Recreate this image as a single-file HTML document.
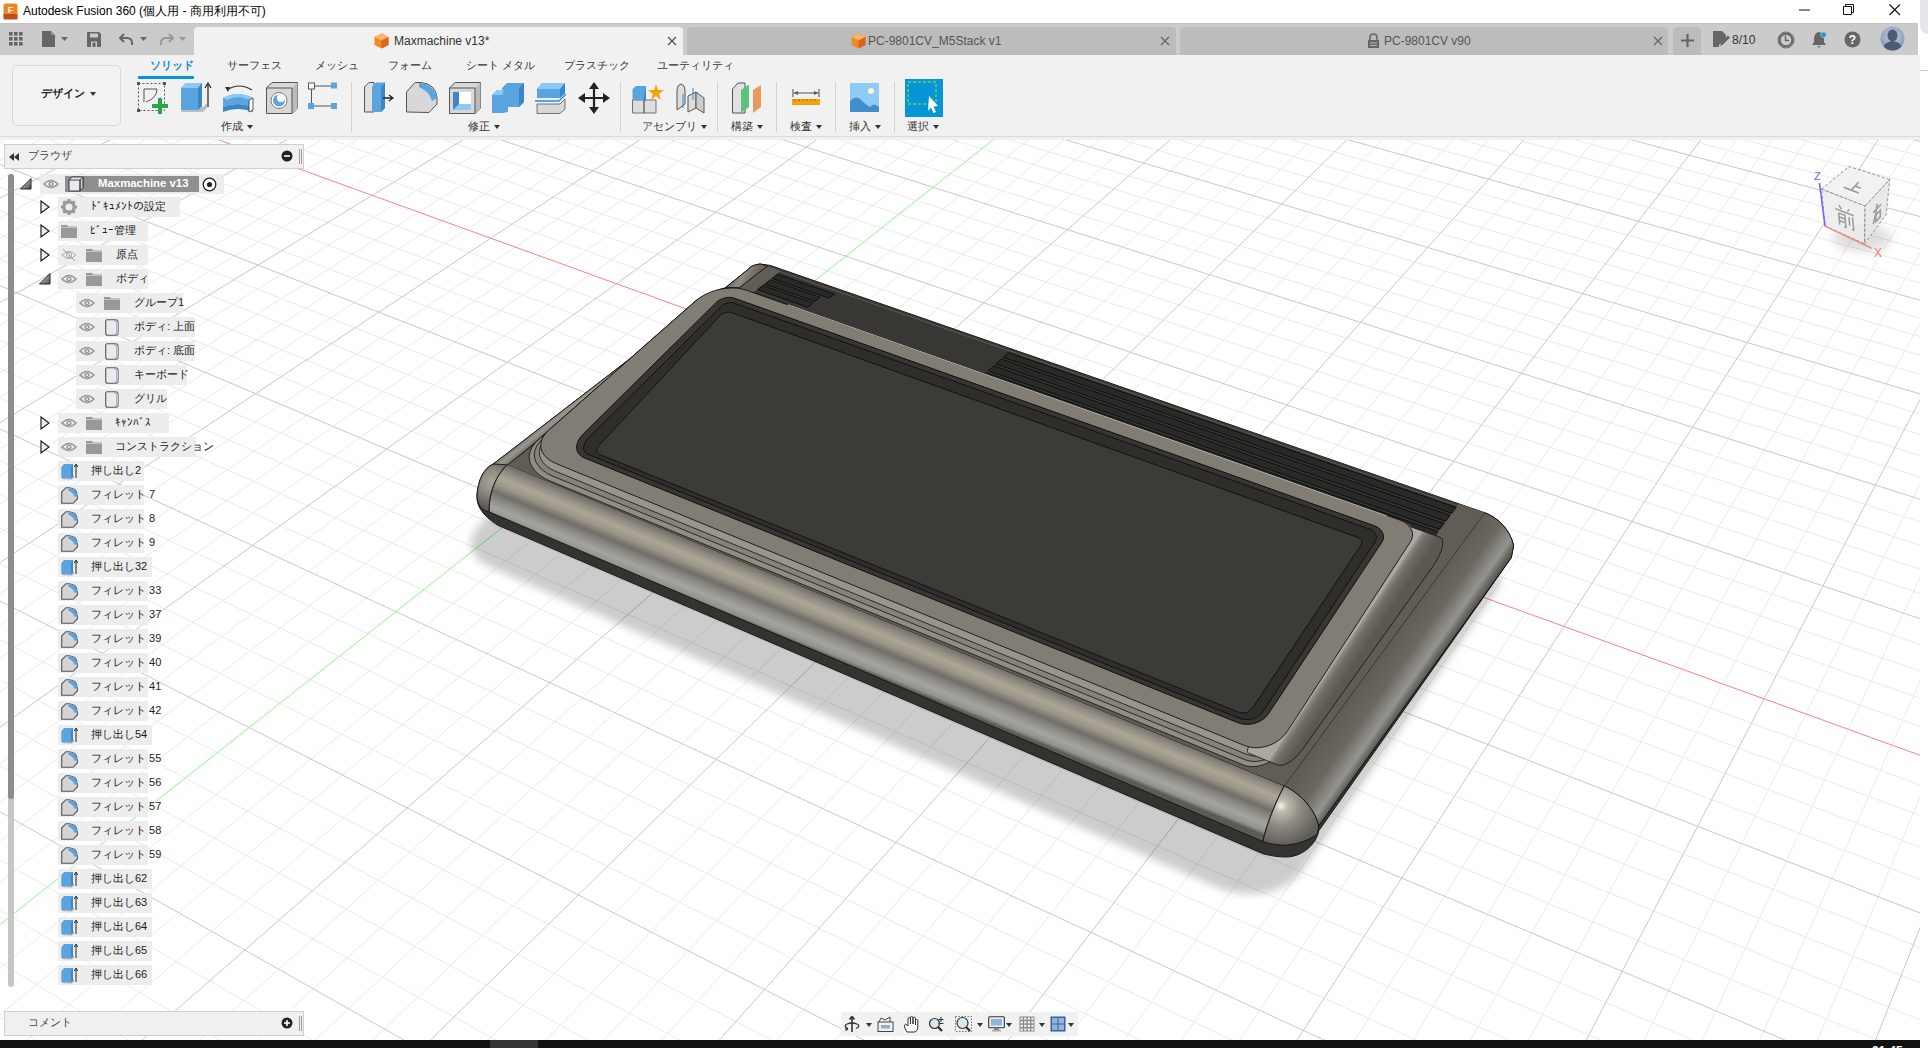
<!DOCTYPE html><html><head><meta charset="utf-8"><style>
*{margin:0;padding:0;box-sizing:border-box}
html,body{width:1928px;height:1048px;overflow:hidden;background:#fff;font-family:"Liberation Sans",sans-serif;position:relative}
.a{position:absolute}
#title{left:0;top:0;width:1928px;height:23px;background:#fff}
#tabbar{left:0;top:23px;width:1919px;height:32px;background:#c9c9c9}
#toolbar{left:0;top:55px;width:1919px;height:82px;background:#f2f2f2;border-bottom:1px solid #d9d9d9}
#vp{left:0;top:0}
#rstrip{left:1920px;top:0;width:8px;height:1048px;background:#fff}
#taskbar{left:0;top:1040px;width:1928px;height:8px;background:#111}
.txt{white-space:nowrap;color:#000}
</style></head><body>
<svg class="a" id="vp" width="1928" height="1048" viewBox="0 0 1928 1048">
<defs><clipPath id="vpc"><rect x="0" y="137" width="1920" height="903"/></clipPath><filter id="blur8" x="-20%" y="-20%" width="140%" height="140%"><feGaussianBlur stdDeviation="8"/></filter><filter id="blur4" x="-20%" y="-20%" width="140%" height="140%"><feGaussianBlur stdDeviation="4.5"/></filter><filter id="blur6" x="-20%" y="-20%" width="140%" height="140%"><feGaussianBlur stdDeviation="6"/></filter></defs>
<g clip-path="url(#vpc)">
<path d="M-2.0,1016.3L39.3,1042.0M-2.0,143.1L13.8,135.0M-2.0,961.2L131.3,1042.0M-2.0,161.4L49.0,135.0M-2.0,908.7L223.3,1042.0M-2.0,180.1L84.1,135.0M-2.0,858.5L315.3,1042.0M-2.0,219.1L154.4,135.0M-2.0,764.8L499.4,1042.0M-2.0,239.4L189.6,135.0M-2.0,721.0L591.5,1042.0M-2.0,260.2L224.8,135.0M-2.0,679.0L683.5,1042.0M-2.0,281.7L259.9,135.0M-2.0,638.7L775.6,1042.0M-2.0,326.4L330.3,135.0M-2.0,562.9L959.8,1042.0M-2.0,349.7L365.5,135.0M-2.0,527.2L1052.0,1042.0M-2.0,373.7L400.6,135.0M-2.0,492.9L1144.1,1042.0M-2.0,398.4L435.8,135.0M-2.0,459.8L1236.3,1042.0M-2.0,450.1L506.2,135.0M-2.0,397.3L1420.6,1042.0M-2.0,477.2L541.4,135.0M-2.0,367.7L1512.8,1042.0M-2.0,505.1L576.6,135.0M-2.0,339.1L1605.0,1042.0M-2.0,534.0L611.8,135.0M-2.0,311.4L1697.2,1042.0M-2.0,594.6L682.2,135.0M-2.0,258.9L1881.7,1042.0M-2.0,626.4L717.4,135.0M-2.0,234.0L1921.0,1020.3M-2.0,659.3L752.6,135.0M-2.0,209.8L1921.0,983.5M-2.0,693.4L787.9,135.0M-2.0,186.4L1921.0,947.9M-2.0,765.3L858.3,135.0M-2.0,141.7L1921.0,879.9M-2.0,803.2L893.5,135.0M36.8,135.0L1921.0,847.5M-2.0,842.6L928.8,135.0M93.0,135.0L1921.0,815.9M-2.0,883.5L964.0,135.0M149.2,135.0L1921.0,785.3M-2.0,970.2L1034.5,135.0M261.6,135.0L1921.0,726.8M-2.0,1016.2L1069.7,135.0M317.8,135.0L1921.0,698.7M24.3,1042.0L1105.0,135.0M374.0,135.0L1921.0,671.4M82.1,1042.0L1140.2,135.0M430.2,135.0L1921.0,644.8M197.6,1042.0L1210.7,135.0M542.7,135.0L1921.0,593.8M255.3,1042.0L1246.0,135.0M599.0,135.0L1921.0,569.3M313.1,1042.0L1281.3,135.0M655.3,135.0L1921.0,545.5M370.9,1042.0L1316.5,135.0M711.5,135.0L1921.0,522.2M486.4,1042.0L1387.1,135.0M824.1,135.0L1921.0,477.4M544.2,1042.0L1422.3,135.0M880.4,135.0L1921.0,455.8M602.0,1042.0L1457.6,135.0M936.7,135.0L1921.0,434.8M659.8,1042.0L1492.9,135.0M993.1,135.0L1921.0,414.2M775.4,1042.0L1563.5,135.0M1105.7,135.0L1921.0,374.6M833.2,1042.0L1598.8,135.0M1162.1,135.0L1921.0,355.4M891.0,1042.0L1634.1,135.0M1218.4,135.0L1921.0,336.7M948.9,1042.0L1669.4,135.0M1274.8,135.0L1921.0,318.4M1064.5,1042.0L1740.0,135.0M1387.5,135.0L1921.0,283.1M1122.4,1042.0L1775.3,135.0M1443.9,135.0L1921.0,265.9M1180.2,1042.0L1810.6,135.0M1500.3,135.0L1921.0,249.2M1238.1,1042.0L1845.9,135.0M1556.7,135.0L1921.0,232.8M1353.8,1042.0L1916.6,135.0M1669.5,135.0L1921.0,201.1M1411.7,1042.0L1921.0,186.9M1726.0,135.0L1921.0,185.7M1469.5,1042.0L1921.0,251.0M1782.4,135.0L1921.0,170.7M1527.4,1042.0L1921.0,321.0M1838.9,135.0L1921.0,155.9M1643.2,1042.0L1921.0,482.1M1701.1,1042.0L1921.0,575.4M1759.0,1042.0L1921.0,679.1M1816.9,1042.0L1921.0,795.0" stroke="#eaeaea" stroke-width="1" fill="none"/>
<path d="M-2.0,199.3L119.3,135.0M-2.0,810.6L407.4,1042.0M-2.0,303.7L295.1,135.0M-2.0,600.0L867.7,1042.0M-2.0,423.9L471.0,135.0M-2.0,428.0L1328.4,1042.0M-2.0,563.8L647.0,135.0M-2.0,284.8L1789.5,1042.0M-2.0,728.7L823.1,135.0M-2.0,163.7L1921.0,913.4M139.8,1042.0L1175.5,135.0M486.5,135.0L1921.0,619.0M428.6,1042.0L1351.8,135.0M767.8,135.0L1921.0,499.5M717.6,1042.0L1528.2,135.0M1049.4,135.0L1921.0,394.2M1006.7,1042.0L1704.7,135.0M1331.2,135.0L1921.0,300.5M1295.9,1042.0L1881.2,135.0M1613.1,135.0L1921.0,216.8M1585.3,1042.0L1921.0,397.7M1895.3,135.0L1921.0,141.5M1874.8,1042.0L1921.0,925.5" stroke="#c8c8c8" stroke-width="1" fill="none"/>
<path d="M-2.0,926.0L999.2,135.0" stroke="#80ff80" stroke-width="1" fill="none"/>
<path d="M205.4,135.0L1921.0,755.6" stroke="#ff8080" stroke-width="1" fill="none"/>
<defs><linearGradient id="gbar" gradientUnits="userSpaceOnUse" x1="860.0" y1="612.0" x2="839.8" y2="661.2"><stop offset="0" stop-color="#77736b"/><stop offset="0.1" stop-color="#918c82"/><stop offset="0.24" stop-color="#aca696"/><stop offset="0.38" stop-color="#9a9588"/><stop offset="0.52" stop-color="#716e68"/><stop offset="0.64" stop-color="#8a8984"/><stop offset="0.8" stop-color="#a5a49f"/><stop offset="0.93" stop-color="#92918c"/><stop offset="1" stop-color="#5c5a55"/></linearGradient><radialGradient id="gcapL" gradientUnits="userSpaceOnUse" cx="492" cy="482" r="26"><stop offset="0" stop-color="#aaa598"/><stop offset="0.45" stop-color="#8f8b83"/><stop offset="1" stop-color="#5c5a55"/></radialGradient><linearGradient id="grb" gradientUnits="userSpaceOnUse" x1="1384.4" y1="649.2" x2="1425.3" y2="678.0"><stop offset="0" stop-color="#605c55"/><stop offset="0.45" stop-color="#6b675f"/><stop offset="0.7" stop-color="#898884"/><stop offset="0.8" stop-color="#94938f"/><stop offset="0.9" stop-color="#72706b"/><stop offset="1" stop-color="#55534e"/></linearGradient><radialGradient id="grcap" gradientUnits="userSpaceOnUse" cx="1281" cy="806" r="40"><stop offset="0" stop-color="#f4f2ec"/><stop offset="0.16" stop-color="#bdb9ae"/><stop offset="0.5" stop-color="#8d8a82"/><stop offset="1" stop-color="#5f5d58"/></radialGradient><linearGradient id="glside" gradientUnits="userSpaceOnUse" x1="550.5" y1="420.0" x2="556.5" y2="427.5"><stop offset="0" stop-color="#86837d"/><stop offset="0.35" stop-color="#9a9791"/><stop offset="1" stop-color="#67635c"/></linearGradient><linearGradient id="gbcap" gradientUnits="userSpaceOnUse" x1="735.0" y1="272.0" x2="752.0" y2="282.0"><stop offset="0" stop-color="#6c6963"/><stop offset="0.45" stop-color="#8f8b83"/><stop offset="1" stop-color="#6a665f"/></linearGradient><linearGradient id="gramp" gradientUnits="userSpaceOnUse" x1="1347.0" y1="643.0" x2="1362.0" y2="653.0"><stop offset="0" stop-color="#a9a8a3"/><stop offset="0.12" stop-color="#8a8781"/><stop offset="0.4" stop-color="#706c65"/><stop offset="1" stop-color="#5b5751"/></linearGradient></defs><path d="M1495.9,591.1 L1498.5,586.2 L1499.8,581.0 L1499.7,575.6 L1498.2,570.1 L1495.3,564.8 L1491.3,559.6 L1486.1,554.8 L1480.0,550.5 L1472.9,546.7 L1465.3,543.6 L807.4,311.6 L801.0,309.7 L794.2,308.5 L787.0,307.8 L779.6,307.8 L772.3,308.3 L765.1,309.5 L758.3,311.3 L752.0,313.7 L746.3,316.5 L741.5,319.7 L484.3,520.5 L479.3,525.1 L475.3,530.0 L472.5,535.1 L471.0,540.4 L470.9,545.6 L472.1,550.6 L474.6,555.4 L478.4,559.8 L483.3,563.6 L489.4,566.8 L1215.3,886.6 L1224.7,890.1 L1234.5,892.4 L1244.6,893.7 L1254.7,893.8 L1264.5,892.7 L1273.8,890.4 L1282.3,887.1 L1289.9,882.8 L1296.2,877.7 L1301.2,871.7Z" fill="#000" fill-opacity="0.2" filter="url(#blur4)"/>
<path d="M725.4,287.7 L748.1,269.4 Q752,264.8 760.2,264 L770.2,265.4 L1484.6,512.7 C1497,517 1510,529 1513.6,545.5 L1511.3,557.7 L1318.6,831 C1317,843 1303,857 1285.8,857 C1276,857 1268,855 1262.9,853.7 L498,525.3 C486,518 476,508 477,495 C478,480 484,468 493.4,463.9 L628.6,359.8 L694.9,301.5 C699,298 712,291.5 725.4,287.7 Z" fill="#35332f" stroke="#1a1a18" stroke-width="1"/>
<path d="M507.3,464.4 L1284.3,785.8 C1278,797 1266,825 1262.9,841.5 L489,511.8 C489,498 492,480 507.3,464.4 Z" fill="url(#gbar)" stroke="#111" stroke-width="0.9"/>
<path d="M493.4,463.9 C484,468 478,480 477,495 C477,505 482,511 489,511.8 C489,498 492,480 507.3,464.4 Z" fill="url(#gcapL)" stroke="#111" stroke-width="0.9"/>
<path d="M1284.3,785.8 L1484.6,512.7 C1497,517 1510,529 1513.6,545.5 L1511.3,557.7 L1318.6,826 C1316,812 1303,795 1284.3,785.8 Z" fill="url(#grb)" stroke="#111" stroke-width="0.9"/>
<path d="M1284.3,785.8 C1303,795 1316,812 1318.6,826 C1318,832 1317,834 1316.3,834.7 Q1304,843.5 1285.8,845.3 Q1272,845 1262.9,841.5 C1266,825 1278,797 1284.3,785.8 Z" fill="url(#grcap)" stroke="#111" stroke-width="0.9"/>
<path d="M507.7,464.9 L1284.3,785.8 L1484.6,512.7 L767.5,266 Z" fill="#615d56"/>
<path d="M493.4,463.9 L628.6,359.8 L531,446 L507.7,464.9 Z" fill="url(#glside)" stroke="#111" stroke-width="0.8"/>
<path d="M725.4,287.7 L748.1,269.4 Q752,264.8 760.2,264 L767.5,266 L739.4,287.7 Z" fill="url(#gbcap)" stroke="#111" stroke-width="0.9"/>
<path d="M740.4,302.4 L1426.7,546.6 L1458.8,503.8 L782.1,270.1Z" fill="#383733"/>
<path d="M973.5,384.4 L1427.3,545.8 L1431.8,539.8 L979.0,379.4Z" fill="#292926" stroke="#0b0b0a" stroke-width="0.9"/>
<path d="M981.0,377.6 L1433.5,537.6 L1438.0,531.6 L986.5,372.6Z" fill="#292926" stroke="#0b0b0a" stroke-width="0.9"/>
<path d="M988.5,370.8 L1439.6,529.4 L1444.1,523.5 L993.8,365.8Z" fill="#292926" stroke="#0b0b0a" stroke-width="0.9"/>
<path d="M995.8,364.0 L1445.7,521.3 L1450.1,515.4 L1001.2,359.1Z" fill="#292926" stroke="#0b0b0a" stroke-width="0.9"/>
<path d="M1003.1,357.3 L1451.7,513.3 L1456.1,507.4 L1008.4,352.5Z" fill="#292926" stroke="#0b0b0a" stroke-width="0.9"/>
<path d="M757.7,289.6 L807.7,307.2 L813.0,303.0 L763.1,285.5Z" fill="#292926" stroke="#0b0b0a" stroke-width="0.9"/>
<path d="M765.0,284.0 L814.9,301.4 L820.2,297.2 L770.4,279.9Z" fill="#292926" stroke="#0b0b0a" stroke-width="0.9"/>
<path d="M772.3,278.4 L829.4,298.2 L834.5,294.0 L777.6,274.3Z" fill="#292926" stroke="#0b0b0a" stroke-width="0.9"/>
<path d="M777.5,270.6 L1479.3,513.2" stroke="#5e5b55" stroke-width="1"/>
<path d="M539.0,439.3 L534.8,443.3 L531.8,447.7 L529.9,452.3 L529.2,457.0 L529.8,461.7 L531.7,466.3 L534.8,470.7 L539.1,474.7 L544.4,478.3 L550.7,481.3 L1243.7,765.1 L1248.1,766.4 L1253.1,766.7 L1258.3,766.1 L1263.8,764.6 L1269.4,762.2 L1274.9,759.1 L1280.2,755.2 L1285.2,750.7 L1289.6,745.6 L1293.5,740.3 L1415.5,552.3 L1417.5,548.7 L1418.8,545.1 L1419.4,541.4 L1419.3,537.8 L1418.5,534.3 L1417.1,531.1 L1415.0,528.2 L1412.3,525.7 L1409.2,523.6 L1405.6,522.0 L756.6,293.8 L751.9,292.6 L746.8,291.9 L741.2,291.7 L735.4,292.1 L729.5,293.1 L723.6,294.7 L717.9,296.7 L712.5,299.2 L707.5,302.1 L703.1,305.3Z" fill="#928d80" stroke="#121211" stroke-width="0.8"/>
<path d="M543.6,438.0 L539.7,441.8 L536.8,445.8 L535.0,450.0 L534.3,454.3 L534.8,458.6 L536.4,462.8 L539.1,466.8 L542.9,470.4 L547.6,473.7 L553.2,476.4 L1245.5,759.9 L1249.9,761.1 L1254.8,761.5 L1260.0,760.9 L1265.5,759.5 L1271.0,757.2 L1276.4,754.1 L1281.6,750.3 L1286.5,745.9 L1290.9,741.0 L1294.7,735.7 L1414.3,551.4 L1416.2,547.9 L1417.5,544.3 L1418.0,540.7 L1417.9,537.1 L1417.1,533.7 L1415.7,530.5 L1413.6,527.7 L1410.9,525.2 L1407.8,523.1 L1404.2,521.6 L758.5,294.5 L753.9,293.2 L748.7,292.5 L743.3,292.4 L737.5,292.8 L731.7,293.7 L725.9,295.2 L720.3,297.2 L714.9,299.6 L710.0,302.5 L705.7,305.6Z" fill="#85827b" stroke="#121211" stroke-width="0.8"/>
<path d="M548.0,436.9 L544.4,440.3 L541.8,444.0 L540.1,447.8 L539.4,451.7 L539.7,455.6 L541.1,459.3 L543.4,462.9 L546.7,466.2 L550.9,469.1 L555.9,471.5 L1247.3,754.6 L1251.6,755.8 L1256.5,756.2 L1261.7,755.7 L1267.1,754.3 L1272.5,752.1 L1277.9,749.1 L1283.0,745.4 L1287.8,741.1 L1292.1,736.3 L1295.9,731.1 L1413.1,550.5 L1415.0,547.1 L1416.2,543.5 L1416.7,540.0 L1416.6,536.4 L1415.7,533.1 L1414.3,530.0 L1412.2,527.1 L1409.5,524.7 L1406.4,522.6 L1402.8,521.1 L760.4,295.2 L755.8,293.9 L750.7,293.2 L745.3,293.0 L739.7,293.4 L733.9,294.3 L728.2,295.8 L722.6,297.7 L717.4,300.1 L712.6,302.8 L708.3,305.9Z" fill="#9a9588" stroke="#121211" stroke-width="0.8"/>
<path d="M1256.5,731.8 L1254.5,734.9 L1252.7,737.9 L1251.1,740.9 L1249.8,743.6 L1248.7,746.1 L1248.0,748.2 L1247.5,750.0 L1247.4,751.5 L1247.6,752.4 L1248.1,752.9 L1277.0,764.8 L1278.9,765.2 L1281.1,765.3 L1283.5,764.8 L1286.1,763.8 L1288.9,762.5 L1291.6,760.6 L1294.4,758.5 L1297.1,755.9 L1299.6,753.1 L1301.9,750.2 L1431.7,568.1 L1434.6,563.9 L1437.1,559.7 L1439.2,555.5 L1440.9,551.6 L1442.0,547.9 L1442.7,544.7 L1442.8,541.9 L1442.4,539.6 L1441.4,538.0 L1439.8,537.1 L1401.0,523.4 L1399.9,523.5 L1398.4,524.2 L1396.5,525.6 L1394.3,527.6 L1391.8,530.1 L1389.1,533.2 L1386.2,536.7 L1383.3,540.5 L1380.4,544.5 L1377.6,548.7Z" fill="url(#gramp)" stroke="#121211" stroke-width="0.8"/>
<path d="M548.4,430.6 L545.2,433.9 L542.8,437.5 L541.3,441.1 L540.7,444.9 L541.0,448.6 L542.3,452.2 L544.5,455.5 L547.5,458.6 L551.3,461.2 L555.9,463.5 L1244.8,745.6 L1249.1,746.9 L1253.7,747.7 L1258.5,747.7 L1263.4,747.0 L1268.2,745.8 L1272.9,743.8 L1277.2,741.3 L1281.2,738.3 L1284.6,734.9 L1287.5,731.1 L1410.5,541.6 L1411.7,539.2 L1412.4,536.7 L1412.6,534.2 L1412.2,531.7 L1411.2,529.2 L1409.7,526.9 L1407.8,524.7 L1405.4,522.8 L1402.7,521.2 L1399.6,519.9 L746.0,290.1 L741.4,288.9 L736.4,288.1 L731.1,288.0 L725.5,288.4 L719.9,289.3 L714.4,290.7 L709.1,292.7 L704.1,295.1 L699.5,297.9 L695.5,301.0Z" fill="#817d75" stroke="#121211" stroke-width="0.9"/>
<path d="M787.7,304.7 L1386.8,515.9" stroke="#b5b4af" stroke-width="1"/>
<path d="M583.2,434.1 L580.8,436.8 L578.9,439.6 L577.6,442.4 L576.8,445.2 L576.6,447.9 L577.1,450.4 L578.1,452.8 L579.7,454.8 L581.8,456.6 L584.4,457.9 L1237.3,722.5 L1240.6,723.6 L1244.0,724.2 L1247.6,724.3 L1251.2,724.0 L1254.8,723.2 L1258.2,722.0 L1261.3,720.4 L1264.1,718.4 L1266.6,716.1 L1268.6,713.5 L1381.8,542.2 L1382.8,540.4 L1383.4,538.5 L1383.5,536.6 L1383.2,534.6 L1382.6,532.7 L1381.5,531.0 L1380.1,529.3 L1378.3,527.9 L1376.2,526.6 L1373.9,525.6 L734.0,298.1 L732.3,297.6 L730.5,297.4 L728.6,297.4 L726.6,297.6 L724.6,298.0 L722.7,298.6 L720.8,299.4 L719.0,300.3 L717.4,301.4 L716.0,302.7Z" fill="#383632" stroke="#0e0e0d" stroke-width="1"/>
<path d="M589.2,437.1 L587.4,439.1 L585.9,441.2 L584.7,443.3 L584.0,445.4 L583.6,447.4 L583.7,449.2 L584.2,450.9 L585.1,452.3 L586.5,453.5 L588.1,454.4 L1238.6,718.0 L1241.2,718.9 L1243.9,719.4 L1246.7,719.6 L1249.4,719.4 L1252.2,718.9 L1254.7,718.1 L1257.1,717.0 L1259.2,715.6 L1261.0,714.0 L1262.5,712.1 L1375.0,542.0 L1375.7,540.6 L1376.2,539.1 L1376.4,537.5 L1376.3,536.0 L1375.8,534.5 L1375.1,533.1 L1374.0,531.9 L1372.8,530.8 L1371.3,529.8 L1369.6,529.1 L733.8,303.0 L732.7,302.7 L731.5,302.6 L730.1,302.5 L728.8,302.7 L727.4,303.0 L726.0,303.4 L724.7,303.9 L723.5,304.6 L722.3,305.4 L721.4,306.2Z" fill="#302e2b" stroke="#0e0e0d" stroke-width="0.9"/>
<path d="M599.9,444.5 L598.9,445.7 L598.1,446.9 L597.5,448.1 L597.1,449.3 L597.0,450.5 L597.1,451.6 L597.4,452.6 L598.0,453.4 L598.8,454.1 L599.8,454.6 L1238.4,712.1 L1239.8,712.6 L1241.4,712.8 L1243.0,712.9 L1244.6,712.8 L1246.2,712.5 L1247.7,712.0 L1249.1,711.3 L1250.4,710.4 L1251.4,709.4 L1252.3,708.3 L1361.1,544.9 L1361.5,544.0 L1361.8,543.2 L1361.8,542.3 L1361.7,541.4 L1361.3,540.6 L1360.8,539.7 L1360.1,539.0 L1359.2,538.3 L1358.2,537.7 L1357.1,537.2 L731.8,312.6 L730.7,312.3 L729.5,312.2 L728.2,312.1 L726.9,312.3 L725.6,312.5 L724.3,312.9 L723.0,313.4 L721.9,314.1 L720.9,314.8 L720.0,315.6Z" fill="#3d3b37" stroke="#0e0e0d" stroke-width="0.9"/>
</g></svg>
<div class="a" id="rstrip"></div>
<svg class="a" style="left:3px;top:3px" width="15" height="17" viewBox="0 0 15 17" ><rect x="0.5" y="0.5" width="14" height="15" rx="2" fill="#f58220"/><rect x="0.5" y="11" width="14" height="5.5" rx="1" fill="#b8501a"/><text x="7.5" y="9.5" font-size="9" font-weight="bold" fill="#fff" text-anchor="middle" font-family="Liberation Sans">F</text></svg><div class="a txt" style="left:23px;top:5px;font-size:12px;color:#000;font-weight:normal;line-height:1;">Autodesk Fusion 360 (個人用 - 商用利用不可)</div><svg class="a" style="left:1799px;top:9px" width="12" height="2" viewBox="0 0 12 2" ><rect width="11" height="1" y="0.5" fill="#111"/></svg><svg class="a" style="left:1843px;top:4px" width="12" height="12" viewBox="0 0 12 12" ><path d="M2.5,2.5 V0.5 H10.5 V8.5 H8.5 M0.5,2.5 H8.5 V10.5 H0.5Z" fill="none" stroke="#111" stroke-width="1"/></svg><svg class="a" style="left:1889px;top:4px" width="12" height="12" viewBox="0 0 12 12" ><path d="M0.5,0.5 L11,11 M11,0.5 L0.5,11" stroke="#111" stroke-width="1.1"/></svg>
<div class="a" style="left:0;top:23px;width:1918px;height:32px;background:#cbcbcb;border-top:1px solid #c3c3c3"></div><svg class="a" style="left:8px;top:31px" width="16" height="16" viewBox="0 0 16 16" ><rect x="1" y="1" width="3.6" height="3.6" fill="#666"/><rect x="1" y="6" width="3.6" height="3.6" fill="#666"/><rect x="1" y="11" width="3.6" height="3.6" fill="#666"/><rect x="6" y="1" width="3.6" height="3.6" fill="#666"/><rect x="6" y="6" width="3.6" height="3.6" fill="#666"/><rect x="6" y="11" width="3.6" height="3.6" fill="#666"/><rect x="11" y="1" width="3.6" height="3.6" fill="#666"/><rect x="11" y="6" width="3.6" height="3.6" fill="#666"/><rect x="11" y="11" width="3.6" height="3.6" fill="#666"/></svg><svg class="a" style="left:42px;top:31px" width="14" height="17" viewBox="0 0 14 17" ><path d="M0,0 H9 L13,4 V16 H0Z" fill="#666"/><path d="M9,0 V4 H13" fill="#999"/></svg><svg class="a" style="left:61px;top:37px" width="7" height="4" viewBox="0 0 7 4" ><path d="M0,0 L7,0 L3.5,4Z" fill="#666"/></svg><svg class="a" style="left:87px;top:32px" width="15" height="15" viewBox="0 0 15 15" ><path d="M0,1 Q0,0 1,0 H12 L14,2 V14 Q14,15 13,15 H1 Q0,15 0,14Z" fill="#666"/><rect x="3" y="1.5" width="8" height="4" fill="#cbcbcb"/><rect x="4" y="9.5" width="6" height="5.5" fill="#cbcbcb"/><rect x="5.5" y="10.5" width="3" height="4.5" fill="#666"/></svg><svg class="a" style="left:119px;top:33px" width="15" height="13" viewBox="0 0 15 13" ><path d="M5,1 L1,5 L5,9 M1.5,5 H8 Q13,5 13,10 V12" fill="none" stroke="#666" stroke-width="2"/></svg><svg class="a" style="left:140px;top:37px" width="7" height="4" viewBox="0 0 7 4" ><path d="M0,0 L7,0 L3.5,4Z" fill="#666"/></svg><svg class="a" style="left:159px;top:33px" width="15" height="13" viewBox="0 0 15 13" ><path d="M10,1 L14,5 L10,9 M13.5,5 H7 Q2,5 2,10 V12" fill="none" stroke="#999" stroke-width="2"/></svg><svg class="a" style="left:179px;top:37px" width="7" height="4" viewBox="0 0 7 4" ><path d="M0,0 L7,0 L3.5,4Z" fill="#999"/></svg><div class="a" style="left:194px;top:27px;width:489px;height:28px;background:#f1f1f1;border-radius:4px 4px 0 0"></div><svg class="a" style="left:374px;top:33px" width="15" height="16" viewBox="0 0 15 16" ><path d="M7.5,0.5 L14.5,4 V12 L7.5,15.5 L0.5,12 V4Z" fill="#f08a24"/><path d="M7.5,0.5 L14.5,4 L7.5,7.5 L0.5,4Z" fill="#fbb46a"/><path d="M7.5,7.5 V15.5 L14.5,12 V4Z" fill="#d9661a"/></svg><div class="a txt" style="left:394px;top:35px;font-size:12px;color:#333;font-weight:normal;line-height:1;">Maxmachine v13*</div><svg class="a" style="left:667px;top:36px" width="10" height="10" viewBox="0 0 10 10" ><path d="M1,1 L9,9 M9,1 L1,9" stroke="#555" stroke-width="1.3"/></svg><div class="a" style="left:687px;top:27px;width:489px;height:28px;background:#bcbcbc;border-radius:4px 4px 0 0"></div><svg class="a" style="left:851px;top:33px" width="15" height="16" viewBox="0 0 15 16" ><path d="M7.5,0.5 L14.5,4 V12 L7.5,15.5 L0.5,12 V4Z" fill="#f08a24"/><path d="M7.5,0.5 L14.5,4 L7.5,7.5 L0.5,4Z" fill="#fbb46a"/><path d="M7.5,7.5 V15.5 L14.5,12 V4Z" fill="#d9661a"/></svg><div class="a txt" style="left:868px;top:35px;font-size:12px;color:#555;font-weight:normal;line-height:1;">PC-9801CV_M5Stack v1</div><svg class="a" style="left:1160px;top:36px" width="10" height="10" viewBox="0 0 10 10" ><path d="M1,1 L9,9 M9,1 L1,9" stroke="#666" stroke-width="1.3"/></svg><div class="a" style="left:1180px;top:27px;width:488px;height:28px;background:#bcbcbc;border-radius:4px 4px 0 0"></div><svg class="a" style="left:1367px;top:33px" width="13" height="15" viewBox="0 0 13 15" ><path d="M3,7 V4.5 Q3,1 6.5,1 Q10,1 10,4.5 V7" fill="none" stroke="#666" stroke-width="1.6"/><rect x="1" y="7" width="11" height="8" fill="#666"/><rect x="3" y="9.5" width="7" height="1" fill="#bcbcbc"/><rect x="3" y="12" width="7" height="1" fill="#bcbcbc"/></svg><div class="a txt" style="left:1384px;top:35px;font-size:12px;color:#555;font-weight:normal;line-height:1;">PC-9801CV v90</div><svg class="a" style="left:1653px;top:36px" width="10" height="10" viewBox="0 0 10 10" ><path d="M1,1 L9,9 M9,1 L1,9" stroke="#666" stroke-width="1.3"/></svg><div class="a" style="left:1673px;top:27px;width:28px;height:28px;background:#bcbcbc;border-radius:4px 4px 0 0"></div><svg class="a" style="left:1681px;top:34px" width="13" height="13" viewBox="0 0 13 13" ><path d="M6.5,0 V13 M0,6.5 H13" stroke="#666" stroke-width="2.2"/></svg><svg class="a" style="left:1713px;top:31px" width="17" height="17" viewBox="0 0 17 17" ><path d="M0,0 H9 L13,4 V7 L6,14 V16 H0Z" fill="#666"/><path d="M7,15 L8,11.5 L15,4.5 L17,6.5 L10,13.5Z" fill="#666"/></svg><div class="a txt" style="left:1732px;top:34px;font-size:12px;color:#333;font-weight:normal;line-height:1;">8/10</div><svg class="a" style="left:1777px;top:31px" width="18" height="18" viewBox="0 0 18 18" ><circle cx="9" cy="9" r="8" fill="none" stroke="#666" stroke-width="1"/><circle cx="9" cy="9" r="6.3" fill="none" stroke="#666" stroke-width="2"/><path d="M8.5,4.5 V9.5 H12" fill="none" stroke="#666" stroke-width="1.5"/></svg><svg class="a" style="left:1812px;top:31px" width="16" height="18" viewBox="0 0 16 18" ><path d="M7,1 Q12,2 12,8 V11 L14,14 H0 L2,11 V8 Q2,2 7,1Z" fill="#666"/><path d="M5.5,15 H8.5 L7,17Z" fill="#666"/><circle cx="11.5" cy="3.7" r="2.8" fill="#1b9be4" stroke="#cbcbcb" stroke-width="0.6"/></svg><svg class="a" style="left:1844px;top:31px" width="17" height="17" viewBox="0 0 17 17" ><circle cx="8.5" cy="8.5" r="8" fill="#666"/><text x="8.5" y="13" font-size="12" font-weight="bold" fill="#fff" text-anchor="middle" font-family="Liberation Sans">?</text></svg><svg class="a" style="left:1880px;top:26px" width="25" height="25" viewBox="0 0 25 25" ><defs><radialGradient id="av" cx="0.5" cy="0.4" r="0.6"><stop offset="0" stop-color="#c2cee0"/><stop offset="1" stop-color="#8798b6"/></radialGradient><clipPath id="avc"><circle cx="12.5" cy="12.5" r="12"/></clipPath></defs><circle cx="12.5" cy="12.5" r="12" fill="url(#av)"/><g clip-path="url(#avc)" fill="#4d5a73"><ellipse cx="12.5" cy="9.5" rx="5" ry="6"/><path d="M2,25 Q3,16 12.5,15 Q22,16 23,25Z"/></g></svg><div class="a" style="left:1920px;top:0;width:8px;height:34px;background:#e4e6eb;border-radius:0 0 0 8px"></div><div class="a" style="left:1920px;top:70px;width:8px;height:1px;background:#c8c8c8"></div>
<div class="a" style="left:0;top:55px;width:1920px;height:82px;background:#f1f1f1;border-bottom:1px solid #dadada"></div><div class="a" style="left:0;top:137px;width:1920px;height:3px;background:#f0f0f0"></div><div class="a" style="left:12px;top:65px;width:109px;height:61px;border:1px solid #d8d8d8;border-radius:5px;background:#f2f2f2"></div><div class="a txt" style="left:41px;top:88px;font-size:11px;color:#222;font-weight:bold;line-height:1;">デザイン<svg width="6" height="4" style="margin-left:5px;vertical-align:middle"><path d="M0,0 H6 L3,4Z" fill="#333"/></svg></div><div class="a txt" style="left:150px;top:60px;font-size:11px;color:#0a8ad0;font-weight:bold;line-height:1;">ソリッド</div><div class="a txt" style="left:227px;top:60px;font-size:11px;color:#333;font-weight:normal;line-height:1;">サーフェス</div><div class="a txt" style="left:315px;top:60px;font-size:11px;color:#333;font-weight:normal;line-height:1;">メッシュ</div><div class="a txt" style="left:388px;top:60px;font-size:11px;color:#333;font-weight:normal;line-height:1;">フォーム</div><div class="a txt" style="left:466px;top:60px;font-size:11px;color:#333;font-weight:normal;line-height:1;">シート メタル</div><div class="a txt" style="left:564px;top:60px;font-size:11px;color:#333;font-weight:normal;line-height:1;">プラスチック</div><div class="a txt" style="left:657px;top:60px;font-size:11px;color:#333;font-weight:normal;line-height:1;">ユーティリティ</div><div class="a" style="left:138px;top:76px;width:56px;height:3px;background:#0696d7;border-radius:1px"></div><div class="a" style="left:351px;top:82px;width:1px;height:50px;background:#d2d2d2"></div><div class="a" style="left:620px;top:82px;width:1px;height:50px;background:#d2d2d2"></div><div class="a" style="left:717px;top:82px;width:1px;height:50px;background:#d2d2d2"></div><div class="a" style="left:776px;top:82px;width:1px;height:50px;background:#d2d2d2"></div><div class="a" style="left:835px;top:82px;width:1px;height:50px;background:#d2d2d2"></div><div class="a" style="left:894px;top:82px;width:1px;height:50px;background:#d2d2d2"></div><div class="a txt" style="left:221px;top:121px;font-size:11px;color:#333;font-weight:normal;line-height:1;">作成<svg width="6" height="4" style="margin-left:4px;vertical-align:middle"><path d="M0,0 H6 L3,4Z" fill="#333"/></svg></div><div class="a txt" style="left:468px;top:121px;font-size:11px;color:#333;font-weight:normal;line-height:1;">修正<svg width="6" height="4" style="margin-left:4px;vertical-align:middle"><path d="M0,0 H6 L3,4Z" fill="#333"/></svg></div><div class="a txt" style="left:642px;top:121px;font-size:11px;color:#333;font-weight:normal;line-height:1;">アセンブリ<svg width="6" height="4" style="margin-left:4px;vertical-align:middle"><path d="M0,0 H6 L3,4Z" fill="#333"/></svg></div><div class="a txt" style="left:731px;top:121px;font-size:11px;color:#333;font-weight:normal;line-height:1;">構築<svg width="6" height="4" style="margin-left:4px;vertical-align:middle"><path d="M0,0 H6 L3,4Z" fill="#333"/></svg></div><div class="a txt" style="left:790px;top:121px;font-size:11px;color:#333;font-weight:normal;line-height:1;">検査<svg width="6" height="4" style="margin-left:4px;vertical-align:middle"><path d="M0,0 H6 L3,4Z" fill="#333"/></svg></div><div class="a txt" style="left:849px;top:121px;font-size:11px;color:#333;font-weight:normal;line-height:1;">挿入<svg width="6" height="4" style="margin-left:4px;vertical-align:middle"><path d="M0,0 H6 L3,4Z" fill="#333"/></svg></div><div class="a txt" style="left:907px;top:121px;font-size:11px;color:#333;font-weight:normal;line-height:1;">選択<svg width="6" height="4" style="margin-left:4px;vertical-align:middle"><path d="M0,0 H6 L3,4Z" fill="#333"/></svg></div><svg class="a" style="left:137px;top:82px" width="33" height="32" viewBox="0 0 33 32" ><rect x="1.5" y="1.5" width="26" height="27" fill="none" stroke="#555" stroke-dasharray="2,2" stroke-width="1"/><rect x="0" y="0" width="3" height="3" fill="#555"/><rect x="26" y="0" width="3" height="3" fill="#555"/><rect x="0" y="27" width="3" height="3" fill="#555"/><path d="M7,7 H20 Q20,16 9,20 M7,7 V20" fill="none" stroke="#555" stroke-width="1"/><path d="M23,16 V32 M15,24 H31" stroke="#2aa34a" stroke-width="4"/></svg><svg class="a" style="left:181px;top:82px" width="31" height="33" viewBox="0 0 31 33" ><path d="M0,29 L4,25 H22 L26,21 V26 L22,30 H0Z" fill="#bdbdbd"/><path d="M0,6 L5,1 H21 V25 H0Z" fill="#5aa5e0"/><path d="M0,6 H17 L21,1 H5Z" fill="#8fc8f5"/><path d="M17,6 L21,1 V24 L17,28Z" fill="#3d86c6"/><rect x="0" y="6" width="17" height="22" fill="#5aa5e0"/><path d="M27,25 V3 M24,6 L27,1 L30,6" fill="none" stroke="#222" stroke-width="1.2"/></svg><svg class="a" style="left:222px;top:82px" width="34" height="32" viewBox="0 0 34 32" ><path d="M5,8 Q17,0 30,8" fill="none" stroke="#333" stroke-width="1.2"/><path d="M3,5 L6,10 L8,5Z" fill="#333"/><path d="M1,16 Q16,8 31,16 V25 Q16,19 1,25Z" fill="#5aa5e0"/><path d="M1,16 Q16,8 31,16 L27,18 Q16,12 5,18Z" fill="#8fc8f5"/><path d="M1,25 Q16,19 31,25 V30 Q16,24 1,30Z" fill="#3d86c6"/><path d="M27,18 L31,16 V28 L27,30Z" fill="#fff" stroke="#333" stroke-width="0.8"/></svg><svg class="a" style="left:266px;top:82px" width="32" height="32" viewBox="0 0 32 32" ><path d="M0.5,6 L6,0.5 H31.5 V26 L26,31.5 H0.5Z" fill="#d8d8d8" stroke="#555" stroke-width="1"/><path d="M26,6 L31.5,0.5 V26 L26,31.5Z" fill="#bbb"/><path d="M0.5,6 H26 V31.5" fill="none" stroke="#555" stroke-width="1"/><circle cx="13" cy="18.5" r="8" fill="#fff" stroke="#777" stroke-width="1"/><circle cx="13" cy="18.5" r="6" fill="#5aa5e0"/><circle cx="15" cy="16" r="4" fill="#fff"/></svg><svg class="a" style="left:308px;top:82px" width="30" height="32" viewBox="0 0 30 32" ><rect x="0.5" y="1" width="6" height="6" fill="#fff" stroke="#555"/><rect x="23" y="0.5" width="6" height="6" fill="#5aa5e0"/><rect x="0" y="21" width="6" height="6" fill="#5aa5e0"/><rect x="23" y="21" width="6" height="6" fill="#5aa5e0"/><path d="M7,4 H23 M3.5,7 V21 M6,24 H23" stroke="#555" stroke-width="1"/></svg><svg class="a" style="left:364px;top:82px" width="30" height="32" viewBox="0 0 30 32" ><path d="M0.5,30 V5 L5,0.5 H10 V30Z" fill="#e0e0e0" stroke="#555"/><path d="M8,30 V5 L12,0.5 H21 V26 L17,30Z" fill="#5aa5e0"/><path d="M17,5 L21,0.5 V26 L17,30Z" fill="#3d86c6"/><path d="M19,16 H28 M25,13 L29,16 L25,19" fill="none" stroke="#222" stroke-width="1.3"/></svg><svg class="a" style="left:406px;top:82px" width="33" height="32" viewBox="0 0 33 32" ><path d="M0.5,30 V10 L9,0.5 H15 Q30,2 31,16 V22 L23,30.5Z" fill="#d8d8d8" stroke="#555"/><path d="M13,1 Q28,2 31,16 L26,19 Q23,9 13,5Z" fill="#5aa5e0"/></svg><svg class="a" style="left:449px;top:82px" width="33" height="32" viewBox="0 0 33 32" ><path d="M0.5,6 L6,0.5 H31.5 V26 L26,31.5 H0.5Z" fill="#d8d8d8" stroke="#555"/><path d="M26,6 L31.5,0.5 V26 L26,31.5Z" fill="#bbb"/><path d="M0.5,6 H26 V31.5" fill="none" stroke="#555"/><rect x="4" y="10" width="18" height="18" fill="#fff"/><path d="M4,10 H10 V22 H22 V28 H4Z" fill="#3d86c6"/><path d="M10,22 H22 V28 H4Z" fill="#8fc8f5"/></svg><svg class="a" style="left:492px;top:82px" width="33" height="32" viewBox="0 0 33 32" ><path d="M10,6 L15,1 H32 V20 L27,25 H10Z" fill="#5aa5e0"/><path d="M27,6 L32,1 V20 L27,25Z" fill="#3d86c6"/><path d="M0,13 L5,8 H16 V30 L11,31 H0Z" fill="#5aa5e0"/><path d="M0,13 L5,8 H12 L10,13Z" fill="#8fc8f5"/></svg><svg class="a" style="left:535px;top:82px" width="33" height="32" viewBox="0 0 33 32" ><path d="M2,7 L7,1 H30 V11 L25,16 H2Z" fill="#5aa5e0"/><path d="M2,7 H25 L30,1 H7Z" fill="#8fc8f5"/><path d="M25,7 L30,1 V11 L25,16Z" fill="#3d86c6"/><path d="M0,19 H24 L31,12" fill="none" stroke="#1e8fe0" stroke-width="1.3"/><path d="M2,22 H25 L30,17 V27 L25,31.5 H2Z" fill="#d8d8d8" stroke="#555" stroke-width="0.8"/></svg><svg class="a" style="left:578px;top:82px" width="32" height="32" viewBox="0 0 32 32" ><path d="M16,2 V30 M2,16 H30" stroke="#222" stroke-width="2.2"/><path d="M16,0 L11,7 H21Z M16,32 L11,25 H21Z M0,16 L7,11 V21Z M32,16 L25,11 V21Z" fill="#222"/></svg><svg class="a" style="left:632px;top:82px" width="34" height="32" viewBox="0 0 34 32" ><path d="M0.5,18 H12 V31 H0.5Z M12,18 H24 V31 H12Z" fill="#ddd" stroke="#555" stroke-width="0.8"/><path d="M0.5,7 L4,4 H14 V18 H0.5Z" fill="#5aa5e0"/><path d="M14,4 V18 L11,20" fill="#3d86c6"/><path d="M24,2 L26,8 L32,8 L27,12 L29,18 L24,14 L19,18 L21,12 L16,8 L22,8Z" fill="#f5a30a"/></svg><svg class="a" style="left:676px;top:82px" width="30" height="32" viewBox="0 0 30 32" ><path d="M1,28 V8 Q1,3 5,2 Q9,3 9,8 V22Z" fill="#ddd" stroke="#555"/><path d="M12,30 V14 L20,10 V26Z" fill="#ddd" stroke="#555"/><path d="M20,26 V10 L28,16 V31Z" fill="#ccc" stroke="#555"/><path d="M7,12 V26 M17,6 V18" stroke="#1e8fe0" stroke-width="1"/></svg><svg class="a" style="left:732px;top:82px" width="31" height="32" viewBox="0 0 31 32" ><path d="M0.5,31 V7 L6,1 H13 V31Z" fill="#e2e2e2" stroke="#555"/><path d="M9,31 V8 L17,2.5 V25Z" fill="#5cc17a"/><path d="M21,31 V8 L29,3 V25Z" fill="#e89a63"/></svg><svg class="a" style="left:792px;top:89px" width="29" height="18" viewBox="0 0 29 18" ><path d="M1,0 V8 M27,0 V8 M2,4 H26" stroke="#555" stroke-width="1.1"/><path d="M2,4 L6,2 V6Z M26,4 L22,2 V6Z" fill="#555"/><rect x="0" y="10" width="28" height="6" fill="#f5a20b"/><path d="M3,10 V12 M7,10 V12 M11,10 V12 M15,10 V12 M19,10 V12 M23,10 V12" stroke="#7a5200" stroke-width="0.8"/></svg><svg class="a" style="left:850px;top:83px" width="30" height="30" viewBox="0 0 30 30" ><rect x="0" y="0" width="29" height="29" fill="#8fcbf8"/><path d="M0,29 V18 Q5,12 10,16 Q15,21 20,24 Q24,19 29,24 V29Z" fill="#3f8fcf"/><circle cx="21" cy="8" r="3" fill="#fff7c0"/></svg><svg class="a" style="left:905px;top:79px" width="39" height="38" viewBox="0 0 39 38" ><rect x="0" y="0" width="38" height="38" fill="#0696d7"/><rect x="3" y="3" width="28" height="22" fill="none" stroke="#62d36a" stroke-width="1.4" stroke-dasharray="3,2"/><path d="M24,17 L33,27 L28.5,27.5 L31,33 L28.5,34 L26,28.5 L23,32Z" fill="#fff"/></svg>
<div class="a" style="left:4px;top:144px;width:300px;height:25px;background:#f0f0f0;border:1px solid #cfcfcf"></div><svg class="a" style="left:9px;top:153px" width="11" height="8" viewBox="0 0 11 8" ><path d="M0,4 L5,0 V8Z M5,4 L10,0 V8Z" fill="#333"/></svg><div class="a txt" style="left:28px;top:150px;font-size:11px;color:#444;font-weight:normal;line-height:1;">ブラウザ</div><svg class="a" style="left:281px;top:150px" width="12" height="12" viewBox="0 0 12 12" ><circle cx="6" cy="6" r="5.5" fill="#222"/><rect x="3" y="5.2" width="6" height="1.6" fill="#fff"/></svg><svg class="a" style="left:299px;top:149px" width="3" height="15" viewBox="0 0 3 15" ><path d="M0.5,0 V15 M2.5,0 V15" stroke="#888" stroke-width="0.8"/></svg><div class="a" style="left:8px;top:174px;width:6px;height:813px;background:#c6c6c6;border-radius:3px"></div><div class="a" style="left:8px;top:174px;width:6px;height:625px;background:#8d8d8d;border-radius:3px"></div><div class="a" style="left:40px;top:174px;width:184px;height:20px;background:rgba(236,236,236,0.92)"></div><svg class="a" style="left:20px;top:178px" width="12" height="12" viewBox="0 0 12 12" ><defs><linearGradient id="tg" x1="0" y1="0" x2="1" y2="1"><stop offset="0" stop-color="#eee"/><stop offset="1" stop-color="#444"/></linearGradient></defs><path d="M11,0.5 V11 H0.5Z" fill="url(#tg)" stroke="#222" stroke-width="1"/></svg><svg class="a" style="left:43px;top:178px" width="16" height="12" viewBox="0 0 16 12" ><path d="M1,6 Q8,-1 15,6 Q8,13 1,6Z" fill="none" stroke="#999" stroke-width="1.6"/><circle cx="8" cy="6" r="2.6" fill="#999"/><circle cx="8" cy="6" r="1.1" fill="#eee"/></svg><div class="a" style="left:65px;top:176px;width:134px;height:16px;background:#8f8f8f"></div><svg class="a" style="left:68px;top:176px" width="16" height="16" viewBox="0 0 16 16" ><path d="M1,4 L4,1 H15 V12 L12,15 H1Z" fill="#e6e9ee" stroke="#333" stroke-width="0.9"/><path d="M12,4 L15,1 V12 L12,15Z" fill="#c9ced6" stroke="#333" stroke-width="0.9"/><path d="M1,4 H12 V15" fill="none" stroke="#333" stroke-width="0.9"/></svg><div class="a txt" style="left:98px;top:178px;font-size:11.4px;color:#fff;font-weight:bold;line-height:1;">Maxmachine v13</div><svg class="a" style="left:202px;top:177px" width="15" height="15" viewBox="0 0 15 15" ><circle cx="7.5" cy="7.5" r="6.3" fill="#fff" stroke="#222" stroke-width="1.3"/><circle cx="7.5" cy="7.5" r="2.6" fill="#222"/></svg><div class="a" style="left:58px;top:197px;width:122px;height:20px;background:rgba(236,236,236,0.92)"></div><svg class="a" style="left:40px;top:200px" width="10" height="14" viewBox="0 0 10 14" ><path d="M1,1 L9,7 L1,13Z" fill="#eee" stroke="#222" stroke-width="1.2"/></svg><svg class="a" style="left:61px;top:199px" width="16" height="16" viewBox="0 0 16 16" ><circle cx="8" cy="8" r="5.2" fill="none" stroke="#999" stroke-width="3.2"/><rect x="6.6" y="0" width="2.8" height="3.5" fill="#999" transform="rotate(0 8 8)"/><rect x="6.6" y="0" width="2.8" height="3.5" fill="#999" transform="rotate(45 8 8)"/><rect x="6.6" y="0" width="2.8" height="3.5" fill="#999" transform="rotate(90 8 8)"/><rect x="6.6" y="0" width="2.8" height="3.5" fill="#999" transform="rotate(135 8 8)"/><rect x="6.6" y="0" width="2.8" height="3.5" fill="#999" transform="rotate(180 8 8)"/><rect x="6.6" y="0" width="2.8" height="3.5" fill="#999" transform="rotate(225 8 8)"/><rect x="6.6" y="0" width="2.8" height="3.5" fill="#999" transform="rotate(270 8 8)"/><rect x="6.6" y="0" width="2.8" height="3.5" fill="#999" transform="rotate(315 8 8)"/></svg><div class="a txt" style="left:91px;top:201px;font-size:11px;color:#222;font-weight:normal;line-height:1;">ﾄﾞｷｭﾒﾝﾄの設定</div><div class="a" style="left:58px;top:221px;width:90px;height:20px;background:rgba(236,236,236,0.92)"></div><svg class="a" style="left:40px;top:224px" width="10" height="14" viewBox="0 0 10 14" ><path d="M1,1 L9,7 L1,13Z" fill="#eee" stroke="#222" stroke-width="1.2"/></svg><svg class="a" style="left:61px;top:224px" width="17" height="14" viewBox="0 0 17 14" ><path d="M0,1 H6 L7,2.5 H16 V3.5 H0Z" fill="#999"/><rect x="0" y="4" width="16" height="10" fill="#999"/></svg><div class="a txt" style="left:90px;top:225px;font-size:11px;color:#222;font-weight:normal;line-height:1;">ﾋﾞｭｰ管理</div><div class="a" style="left:58px;top:245px;width:90px;height:20px;background:rgba(236,236,236,0.92)"></div><svg class="a" style="left:40px;top:248px" width="10" height="14" viewBox="0 0 10 14" ><path d="M1,1 L9,7 L1,13Z" fill="#eee" stroke="#222" stroke-width="1.2"/></svg><svg class="a" style="left:61px;top:249px" width="16" height="12" viewBox="0 0 16 12" ><path d="M1,6 Q8,-1 15,6 Q8,13 1,6Z" fill="none" stroke="#aaa" stroke-width="1"/><circle cx="8" cy="6" r="2.6" fill="none" stroke="#aaa" stroke-width="1"/><path d="M2,0 L14,12" stroke="#999" stroke-width="1"/></svg><svg class="a" style="left:86px;top:248px" width="17" height="14" viewBox="0 0 17 14" ><path d="M0,1 H6 L7,2.5 H16 V3.5 H0Z" fill="#999"/><rect x="0" y="4" width="16" height="10" fill="#999"/></svg><div class="a txt" style="left:116px;top:249px;font-size:11px;color:#222;font-weight:normal;line-height:1;">原点</div><div class="a" style="left:58px;top:269px;width:90px;height:20px;background:rgba(236,236,236,0.92)"></div><svg class="a" style="left:39px;top:273px" width="12" height="12" viewBox="0 0 12 12" ><defs><linearGradient id="tg" x1="0" y1="0" x2="1" y2="1"><stop offset="0" stop-color="#eee"/><stop offset="1" stop-color="#444"/></linearGradient></defs><path d="M11,0.5 V11 H0.5Z" fill="url(#tg)" stroke="#222" stroke-width="1"/></svg><svg class="a" style="left:61px;top:273px" width="16" height="12" viewBox="0 0 16 12" ><path d="M1,6 Q8,-1 15,6 Q8,13 1,6Z" fill="none" stroke="#999" stroke-width="1.6"/><circle cx="8" cy="6" r="2.6" fill="#999"/><circle cx="8" cy="6" r="1.1" fill="#eee"/></svg><svg class="a" style="left:86px;top:272px" width="17" height="14" viewBox="0 0 17 14" ><path d="M0,1 H6 L7,2.5 H16 V3.5 H0Z" fill="#999"/><rect x="0" y="4" width="16" height="10" fill="#999"/></svg><div class="a txt" style="left:116px;top:273px;font-size:11px;color:#222;font-weight:normal;line-height:1;">ボディ</div><div class="a" style="left:76px;top:293px;width:107px;height:20px;background:rgba(236,236,236,0.92)"></div><svg class="a" style="left:79px;top:297px" width="16" height="12" viewBox="0 0 16 12" ><path d="M1,6 Q8,-1 15,6 Q8,13 1,6Z" fill="none" stroke="#999" stroke-width="1.6"/><circle cx="8" cy="6" r="2.6" fill="#999"/><circle cx="8" cy="6" r="1.1" fill="#eee"/></svg><svg class="a" style="left:104px;top:296px" width="17" height="14" viewBox="0 0 17 14" ><path d="M0,1 H6 L7,2.5 H16 V3.5 H0Z" fill="#999"/><rect x="0" y="4" width="16" height="10" fill="#999"/></svg><div class="a txt" style="left:134px;top:297px;font-size:11px;color:#222;font-weight:normal;line-height:1;">グループ1</div><div class="a" style="left:76px;top:317px;width:119px;height:20px;background:rgba(236,236,236,0.92)"></div><svg class="a" style="left:79px;top:321px" width="16" height="12" viewBox="0 0 16 12" ><path d="M1,6 Q8,-1 15,6 Q8,13 1,6Z" fill="none" stroke="#999" stroke-width="1.6"/><circle cx="8" cy="6" r="2.6" fill="#999"/><circle cx="8" cy="6" r="1.1" fill="#eee"/></svg><svg class="a" style="left:105px;top:319px" width="14" height="17" viewBox="0 0 14 17" ><path d="M2,0.7 H10 Q13,0.7 13,3.5 V14 Q13,16.3 10,16.3 H3 Q0.7,16.3 0.7,14 V3 Q0.7,0.7 2,0.7Z" fill="#e8ebf0" stroke="#555" stroke-width="1.1"/><path d="M9,2 Q12,2 12,4 V14 Q12,15 10,15" fill="none" stroke="#b8bcc4" stroke-width="2"/></svg><div class="a txt" style="left:134px;top:321px;font-size:11px;color:#222;font-weight:normal;line-height:1;">ボディ: 上面</div><div class="a" style="left:76px;top:341px;width:119px;height:20px;background:rgba(236,236,236,0.92)"></div><svg class="a" style="left:79px;top:345px" width="16" height="12" viewBox="0 0 16 12" ><path d="M1,6 Q8,-1 15,6 Q8,13 1,6Z" fill="none" stroke="#999" stroke-width="1.6"/><circle cx="8" cy="6" r="2.6" fill="#999"/><circle cx="8" cy="6" r="1.1" fill="#eee"/></svg><svg class="a" style="left:105px;top:343px" width="14" height="17" viewBox="0 0 14 17" ><path d="M2,0.7 H10 Q13,0.7 13,3.5 V14 Q13,16.3 10,16.3 H3 Q0.7,16.3 0.7,14 V3 Q0.7,0.7 2,0.7Z" fill="#e8ebf0" stroke="#555" stroke-width="1.1"/><path d="M9,2 Q12,2 12,4 V14 Q12,15 10,15" fill="none" stroke="#b8bcc4" stroke-width="2"/></svg><div class="a txt" style="left:134px;top:345px;font-size:11px;color:#222;font-weight:normal;line-height:1;">ボディ: 底面</div><div class="a" style="left:76px;top:365px;width:111px;height:20px;background:rgba(236,236,236,0.92)"></div><svg class="a" style="left:79px;top:369px" width="16" height="12" viewBox="0 0 16 12" ><path d="M1,6 Q8,-1 15,6 Q8,13 1,6Z" fill="none" stroke="#999" stroke-width="1.6"/><circle cx="8" cy="6" r="2.6" fill="#999"/><circle cx="8" cy="6" r="1.1" fill="#eee"/></svg><svg class="a" style="left:105px;top:367px" width="14" height="17" viewBox="0 0 14 17" ><path d="M2,0.7 H10 Q13,0.7 13,3.5 V14 Q13,16.3 10,16.3 H3 Q0.7,16.3 0.7,14 V3 Q0.7,0.7 2,0.7Z" fill="#e8ebf0" stroke="#555" stroke-width="1.1"/><path d="M9,2 Q12,2 12,4 V14 Q12,15 10,15" fill="none" stroke="#b8bcc4" stroke-width="2"/></svg><div class="a txt" style="left:134px;top:369px;font-size:11px;color:#222;font-weight:normal;line-height:1;">キーボード</div><div class="a" style="left:76px;top:389px;width:91px;height:20px;background:rgba(236,236,236,0.92)"></div><svg class="a" style="left:79px;top:393px" width="16" height="12" viewBox="0 0 16 12" ><path d="M1,6 Q8,-1 15,6 Q8,13 1,6Z" fill="none" stroke="#999" stroke-width="1.6"/><circle cx="8" cy="6" r="2.6" fill="#999"/><circle cx="8" cy="6" r="1.1" fill="#eee"/></svg><svg class="a" style="left:105px;top:391px" width="14" height="17" viewBox="0 0 14 17" ><path d="M2,0.7 H10 Q13,0.7 13,3.5 V14 Q13,16.3 10,16.3 H3 Q0.7,16.3 0.7,14 V3 Q0.7,0.7 2,0.7Z" fill="#e8ebf0" stroke="#555" stroke-width="1.1"/><path d="M9,2 Q12,2 12,4 V14 Q12,15 10,15" fill="none" stroke="#b8bcc4" stroke-width="2"/></svg><div class="a txt" style="left:134px;top:393px;font-size:11px;color:#222;font-weight:normal;line-height:1;">グリル</div><div class="a" style="left:58px;top:413px;width:111px;height:20px;background:rgba(236,236,236,0.92)"></div><svg class="a" style="left:40px;top:416px" width="10" height="14" viewBox="0 0 10 14" ><path d="M1,1 L9,7 L1,13Z" fill="#eee" stroke="#222" stroke-width="1.2"/></svg><svg class="a" style="left:61px;top:417px" width="16" height="12" viewBox="0 0 16 12" ><path d="M1,6 Q8,-1 15,6 Q8,13 1,6Z" fill="none" stroke="#999" stroke-width="1.6"/><circle cx="8" cy="6" r="2.6" fill="#999"/><circle cx="8" cy="6" r="1.1" fill="#eee"/></svg><svg class="a" style="left:86px;top:416px" width="17" height="14" viewBox="0 0 17 14" ><path d="M0,1 H6 L7,2.5 H16 V3.5 H0Z" fill="#999"/><rect x="0" y="4" width="16" height="10" fill="#999"/></svg><div class="a txt" style="left:115px;top:417px;font-size:11px;color:#222;font-weight:normal;line-height:1;">ｷｬﾝﾊﾞｽ</div><div class="a" style="left:58px;top:437px;width:138px;height:20px;background:rgba(236,236,236,0.92)"></div><svg class="a" style="left:40px;top:440px" width="10" height="14" viewBox="0 0 10 14" ><path d="M1,1 L9,7 L1,13Z" fill="#eee" stroke="#222" stroke-width="1.2"/></svg><svg class="a" style="left:61px;top:441px" width="16" height="12" viewBox="0 0 16 12" ><path d="M1,6 Q8,-1 15,6 Q8,13 1,6Z" fill="none" stroke="#999" stroke-width="1.6"/><circle cx="8" cy="6" r="2.6" fill="#999"/><circle cx="8" cy="6" r="1.1" fill="#eee"/></svg><svg class="a" style="left:86px;top:440px" width="17" height="14" viewBox="0 0 17 14" ><path d="M0,1 H6 L7,2.5 H16 V3.5 H0Z" fill="#999"/><rect x="0" y="4" width="16" height="10" fill="#999"/></svg><div class="a txt" style="left:115px;top:441px;font-size:11px;color:#222;font-weight:normal;line-height:1;">コンストラクション</div><div class="a" style="left:58px;top:461px;width:86px;height:20px;background:rgba(236,236,236,0.92)"></div><svg class="a" style="left:61px;top:463px" width="17" height="17" viewBox="0 0 17 17" ><path d="M0.5,16 L3,14 H11 L13,12 V14 L11,16.5Z" fill="#aaa"/><path d="M0.5,4 L3,1 H12 V14 H0.5Z" fill="#5aa5e0"/><path d="M10,4 L12,1 V13.5 L10,15Z" fill="#3d86c6"/><rect x="0.5" y="4" width="9.5" height="11" fill="#5aa5e0"/><path d="M15,15 V2 M13.3,4 L15,1 L16.7,4" fill="none" stroke="#222" stroke-width="1"/></svg><div class="a txt" style="left:91px;top:465px;font-size:11px;color:#222;font-weight:normal;line-height:1;">押し出し2</div><div class="a" style="left:58px;top:485px;width:86px;height:20px;background:rgba(236,236,236,0.92)"></div><svg class="a" style="left:61px;top:487px" width="17" height="17" viewBox="0 0 17 17" ><path d="M0.7,16.3 V5 L5,0.7 H8 Q16,1 16.3,9 V12 L12,16.3Z" fill="#d4d4d4" stroke="#555" stroke-width="1.1"/><path d="M8,1 Q15,1.5 16.3,8.5 L13.5,10 Q12,5 7,3.5Z" fill="#5aa5e0"/></svg><div class="a txt" style="left:91px;top:489px;font-size:11px;color:#222;font-weight:normal;line-height:1;">フィレット 7</div><div class="a" style="left:58px;top:509px;width:86px;height:20px;background:rgba(236,236,236,0.92)"></div><svg class="a" style="left:61px;top:511px" width="17" height="17" viewBox="0 0 17 17" ><path d="M0.7,16.3 V5 L5,0.7 H8 Q16,1 16.3,9 V12 L12,16.3Z" fill="#d4d4d4" stroke="#555" stroke-width="1.1"/><path d="M8,1 Q15,1.5 16.3,8.5 L13.5,10 Q12,5 7,3.5Z" fill="#5aa5e0"/></svg><div class="a txt" style="left:91px;top:513px;font-size:11px;color:#222;font-weight:normal;line-height:1;">フィレット 8</div><div class="a" style="left:58px;top:533px;width:86px;height:20px;background:rgba(236,236,236,0.92)"></div><svg class="a" style="left:61px;top:535px" width="17" height="17" viewBox="0 0 17 17" ><path d="M0.7,16.3 V5 L5,0.7 H8 Q16,1 16.3,9 V12 L12,16.3Z" fill="#d4d4d4" stroke="#555" stroke-width="1.1"/><path d="M8,1 Q15,1.5 16.3,8.5 L13.5,10 Q12,5 7,3.5Z" fill="#5aa5e0"/></svg><div class="a txt" style="left:91px;top:537px;font-size:11px;color:#222;font-weight:normal;line-height:1;">フィレット 9</div><div class="a" style="left:58px;top:557px;width:94px;height:20px;background:rgba(236,236,236,0.92)"></div><svg class="a" style="left:61px;top:559px" width="17" height="17" viewBox="0 0 17 17" ><path d="M0.5,16 L3,14 H11 L13,12 V14 L11,16.5Z" fill="#aaa"/><path d="M0.5,4 L3,1 H12 V14 H0.5Z" fill="#5aa5e0"/><path d="M10,4 L12,1 V13.5 L10,15Z" fill="#3d86c6"/><rect x="0.5" y="4" width="9.5" height="11" fill="#5aa5e0"/><path d="M15,15 V2 M13.3,4 L15,1 L16.7,4" fill="none" stroke="#222" stroke-width="1"/></svg><div class="a txt" style="left:91px;top:561px;font-size:11px;color:#222;font-weight:normal;line-height:1;">押し出し32</div><div class="a" style="left:58px;top:581px;width:90px;height:20px;background:rgba(236,236,236,0.92)"></div><svg class="a" style="left:61px;top:583px" width="17" height="17" viewBox="0 0 17 17" ><path d="M0.7,16.3 V5 L5,0.7 H8 Q16,1 16.3,9 V12 L12,16.3Z" fill="#d4d4d4" stroke="#555" stroke-width="1.1"/><path d="M8,1 Q15,1.5 16.3,8.5 L13.5,10 Q12,5 7,3.5Z" fill="#5aa5e0"/></svg><div class="a txt" style="left:91px;top:585px;font-size:11px;color:#222;font-weight:normal;line-height:1;">フィレット 33</div><div class="a" style="left:58px;top:605px;width:90px;height:20px;background:rgba(236,236,236,0.92)"></div><svg class="a" style="left:61px;top:607px" width="17" height="17" viewBox="0 0 17 17" ><path d="M0.7,16.3 V5 L5,0.7 H8 Q16,1 16.3,9 V12 L12,16.3Z" fill="#d4d4d4" stroke="#555" stroke-width="1.1"/><path d="M8,1 Q15,1.5 16.3,8.5 L13.5,10 Q12,5 7,3.5Z" fill="#5aa5e0"/></svg><div class="a txt" style="left:91px;top:609px;font-size:11px;color:#222;font-weight:normal;line-height:1;">フィレット 37</div><div class="a" style="left:58px;top:629px;width:90px;height:20px;background:rgba(236,236,236,0.92)"></div><svg class="a" style="left:61px;top:631px" width="17" height="17" viewBox="0 0 17 17" ><path d="M0.7,16.3 V5 L5,0.7 H8 Q16,1 16.3,9 V12 L12,16.3Z" fill="#d4d4d4" stroke="#555" stroke-width="1.1"/><path d="M8,1 Q15,1.5 16.3,8.5 L13.5,10 Q12,5 7,3.5Z" fill="#5aa5e0"/></svg><div class="a txt" style="left:91px;top:633px;font-size:11px;color:#222;font-weight:normal;line-height:1;">フィレット 39</div><div class="a" style="left:58px;top:653px;width:90px;height:20px;background:rgba(236,236,236,0.92)"></div><svg class="a" style="left:61px;top:655px" width="17" height="17" viewBox="0 0 17 17" ><path d="M0.7,16.3 V5 L5,0.7 H8 Q16,1 16.3,9 V12 L12,16.3Z" fill="#d4d4d4" stroke="#555" stroke-width="1.1"/><path d="M8,1 Q15,1.5 16.3,8.5 L13.5,10 Q12,5 7,3.5Z" fill="#5aa5e0"/></svg><div class="a txt" style="left:91px;top:657px;font-size:11px;color:#222;font-weight:normal;line-height:1;">フィレット 40</div><div class="a" style="left:58px;top:677px;width:90px;height:20px;background:rgba(236,236,236,0.92)"></div><svg class="a" style="left:61px;top:679px" width="17" height="17" viewBox="0 0 17 17" ><path d="M0.7,16.3 V5 L5,0.7 H8 Q16,1 16.3,9 V12 L12,16.3Z" fill="#d4d4d4" stroke="#555" stroke-width="1.1"/><path d="M8,1 Q15,1.5 16.3,8.5 L13.5,10 Q12,5 7,3.5Z" fill="#5aa5e0"/></svg><div class="a txt" style="left:91px;top:681px;font-size:11px;color:#222;font-weight:normal;line-height:1;">フィレット 41</div><div class="a" style="left:58px;top:701px;width:90px;height:20px;background:rgba(236,236,236,0.92)"></div><svg class="a" style="left:61px;top:703px" width="17" height="17" viewBox="0 0 17 17" ><path d="M0.7,16.3 V5 L5,0.7 H8 Q16,1 16.3,9 V12 L12,16.3Z" fill="#d4d4d4" stroke="#555" stroke-width="1.1"/><path d="M8,1 Q15,1.5 16.3,8.5 L13.5,10 Q12,5 7,3.5Z" fill="#5aa5e0"/></svg><div class="a txt" style="left:91px;top:705px;font-size:11px;color:#222;font-weight:normal;line-height:1;">フィレット 42</div><div class="a" style="left:58px;top:725px;width:94px;height:20px;background:rgba(236,236,236,0.92)"></div><svg class="a" style="left:61px;top:727px" width="17" height="17" viewBox="0 0 17 17" ><path d="M0.5,16 L3,14 H11 L13,12 V14 L11,16.5Z" fill="#aaa"/><path d="M0.5,4 L3,1 H12 V14 H0.5Z" fill="#5aa5e0"/><path d="M10,4 L12,1 V13.5 L10,15Z" fill="#3d86c6"/><rect x="0.5" y="4" width="9.5" height="11" fill="#5aa5e0"/><path d="M15,15 V2 M13.3,4 L15,1 L16.7,4" fill="none" stroke="#222" stroke-width="1"/></svg><div class="a txt" style="left:91px;top:729px;font-size:11px;color:#222;font-weight:normal;line-height:1;">押し出し54</div><div class="a" style="left:58px;top:749px;width:90px;height:20px;background:rgba(236,236,236,0.92)"></div><svg class="a" style="left:61px;top:751px" width="17" height="17" viewBox="0 0 17 17" ><path d="M0.7,16.3 V5 L5,0.7 H8 Q16,1 16.3,9 V12 L12,16.3Z" fill="#d4d4d4" stroke="#555" stroke-width="1.1"/><path d="M8,1 Q15,1.5 16.3,8.5 L13.5,10 Q12,5 7,3.5Z" fill="#5aa5e0"/></svg><div class="a txt" style="left:91px;top:753px;font-size:11px;color:#222;font-weight:normal;line-height:1;">フィレット 55</div><div class="a" style="left:58px;top:773px;width:90px;height:20px;background:rgba(236,236,236,0.92)"></div><svg class="a" style="left:61px;top:775px" width="17" height="17" viewBox="0 0 17 17" ><path d="M0.7,16.3 V5 L5,0.7 H8 Q16,1 16.3,9 V12 L12,16.3Z" fill="#d4d4d4" stroke="#555" stroke-width="1.1"/><path d="M8,1 Q15,1.5 16.3,8.5 L13.5,10 Q12,5 7,3.5Z" fill="#5aa5e0"/></svg><div class="a txt" style="left:91px;top:777px;font-size:11px;color:#222;font-weight:normal;line-height:1;">フィレット 56</div><div class="a" style="left:58px;top:797px;width:90px;height:20px;background:rgba(236,236,236,0.92)"></div><svg class="a" style="left:61px;top:799px" width="17" height="17" viewBox="0 0 17 17" ><path d="M0.7,16.3 V5 L5,0.7 H8 Q16,1 16.3,9 V12 L12,16.3Z" fill="#d4d4d4" stroke="#555" stroke-width="1.1"/><path d="M8,1 Q15,1.5 16.3,8.5 L13.5,10 Q12,5 7,3.5Z" fill="#5aa5e0"/></svg><div class="a txt" style="left:91px;top:801px;font-size:11px;color:#222;font-weight:normal;line-height:1;">フィレット 57</div><div class="a" style="left:58px;top:821px;width:90px;height:20px;background:rgba(236,236,236,0.92)"></div><svg class="a" style="left:61px;top:823px" width="17" height="17" viewBox="0 0 17 17" ><path d="M0.7,16.3 V5 L5,0.7 H8 Q16,1 16.3,9 V12 L12,16.3Z" fill="#d4d4d4" stroke="#555" stroke-width="1.1"/><path d="M8,1 Q15,1.5 16.3,8.5 L13.5,10 Q12,5 7,3.5Z" fill="#5aa5e0"/></svg><div class="a txt" style="left:91px;top:825px;font-size:11px;color:#222;font-weight:normal;line-height:1;">フィレット 58</div><div class="a" style="left:58px;top:845px;width:90px;height:20px;background:rgba(236,236,236,0.92)"></div><svg class="a" style="left:61px;top:847px" width="17" height="17" viewBox="0 0 17 17" ><path d="M0.7,16.3 V5 L5,0.7 H8 Q16,1 16.3,9 V12 L12,16.3Z" fill="#d4d4d4" stroke="#555" stroke-width="1.1"/><path d="M8,1 Q15,1.5 16.3,8.5 L13.5,10 Q12,5 7,3.5Z" fill="#5aa5e0"/></svg><div class="a txt" style="left:91px;top:849px;font-size:11px;color:#222;font-weight:normal;line-height:1;">フィレット 59</div><div class="a" style="left:58px;top:869px;width:94px;height:20px;background:rgba(236,236,236,0.92)"></div><svg class="a" style="left:61px;top:871px" width="17" height="17" viewBox="0 0 17 17" ><path d="M0.5,16 L3,14 H11 L13,12 V14 L11,16.5Z" fill="#aaa"/><path d="M0.5,4 L3,1 H12 V14 H0.5Z" fill="#5aa5e0"/><path d="M10,4 L12,1 V13.5 L10,15Z" fill="#3d86c6"/><rect x="0.5" y="4" width="9.5" height="11" fill="#5aa5e0"/><path d="M15,15 V2 M13.3,4 L15,1 L16.7,4" fill="none" stroke="#222" stroke-width="1"/></svg><div class="a txt" style="left:91px;top:873px;font-size:11px;color:#222;font-weight:normal;line-height:1;">押し出し62</div><div class="a" style="left:58px;top:893px;width:94px;height:20px;background:rgba(236,236,236,0.92)"></div><svg class="a" style="left:61px;top:895px" width="17" height="17" viewBox="0 0 17 17" ><path d="M0.5,16 L3,14 H11 L13,12 V14 L11,16.5Z" fill="#aaa"/><path d="M0.5,4 L3,1 H12 V14 H0.5Z" fill="#5aa5e0"/><path d="M10,4 L12,1 V13.5 L10,15Z" fill="#3d86c6"/><rect x="0.5" y="4" width="9.5" height="11" fill="#5aa5e0"/><path d="M15,15 V2 M13.3,4 L15,1 L16.7,4" fill="none" stroke="#222" stroke-width="1"/></svg><div class="a txt" style="left:91px;top:897px;font-size:11px;color:#222;font-weight:normal;line-height:1;">押し出し63</div><div class="a" style="left:58px;top:917px;width:94px;height:20px;background:rgba(236,236,236,0.92)"></div><svg class="a" style="left:61px;top:919px" width="17" height="17" viewBox="0 0 17 17" ><path d="M0.5,16 L3,14 H11 L13,12 V14 L11,16.5Z" fill="#aaa"/><path d="M0.5,4 L3,1 H12 V14 H0.5Z" fill="#5aa5e0"/><path d="M10,4 L12,1 V13.5 L10,15Z" fill="#3d86c6"/><rect x="0.5" y="4" width="9.5" height="11" fill="#5aa5e0"/><path d="M15,15 V2 M13.3,4 L15,1 L16.7,4" fill="none" stroke="#222" stroke-width="1"/></svg><div class="a txt" style="left:91px;top:921px;font-size:11px;color:#222;font-weight:normal;line-height:1;">押し出し64</div><div class="a" style="left:58px;top:941px;width:94px;height:20px;background:rgba(236,236,236,0.92)"></div><svg class="a" style="left:61px;top:943px" width="17" height="17" viewBox="0 0 17 17" ><path d="M0.5,16 L3,14 H11 L13,12 V14 L11,16.5Z" fill="#aaa"/><path d="M0.5,4 L3,1 H12 V14 H0.5Z" fill="#5aa5e0"/><path d="M10,4 L12,1 V13.5 L10,15Z" fill="#3d86c6"/><rect x="0.5" y="4" width="9.5" height="11" fill="#5aa5e0"/><path d="M15,15 V2 M13.3,4 L15,1 L16.7,4" fill="none" stroke="#222" stroke-width="1"/></svg><div class="a txt" style="left:91px;top:945px;font-size:11px;color:#222;font-weight:normal;line-height:1;">押し出し65</div><div class="a" style="left:58px;top:965px;width:94px;height:20px;background:rgba(236,236,236,0.92)"></div><svg class="a" style="left:61px;top:967px" width="17" height="17" viewBox="0 0 17 17" ><path d="M0.5,16 L3,14 H11 L13,12 V14 L11,16.5Z" fill="#aaa"/><path d="M0.5,4 L3,1 H12 V14 H0.5Z" fill="#5aa5e0"/><path d="M10,4 L12,1 V13.5 L10,15Z" fill="#3d86c6"/><rect x="0.5" y="4" width="9.5" height="11" fill="#5aa5e0"/><path d="M15,15 V2 M13.3,4 L15,1 L16.7,4" fill="none" stroke="#222" stroke-width="1"/></svg><div class="a txt" style="left:91px;top:969px;font-size:11px;color:#222;font-weight:normal;line-height:1;">押し出し66</div><div class="a" style="left:4px;top:1011px;width:300px;height:25px;background:#f0f0f0;border:1px solid #cfcfcf"></div><div class="a txt" style="left:28px;top:1017px;font-size:11px;color:#444;font-weight:normal;line-height:1;">コメント</div><svg class="a" style="left:281px;top:1017px" width="12" height="12" viewBox="0 0 12 12" ><circle cx="6" cy="6" r="5.5" fill="#222"/><rect x="3" y="5.2" width="6" height="1.6" fill="#fff"/><rect x="5.2" y="3" width="1.6" height="6" fill="#fff"/></svg><svg class="a" style="left:299px;top:1016px" width="3" height="15" viewBox="0 0 3 15" ><path d="M0.5,0 V15 M2.5,0 V15" stroke="#888" stroke-width="0.8"/></svg>
<div class="a" style="left:841px;top:1012px;width:237px;height:24px;background:rgba(240,240,240,0.95)"></div><svg class="a" style="left:844px;top:1016px" width="17" height="17" viewBox="0 0 17 17" ><path d="M8,1 V16 M5.5,3.5 L8,0.5 L10.5,3.5" fill="none" stroke="#333" stroke-width="1.6"/><path d="M4,13 Q-1,10 3,8 Q8,6 13,8 Q17,10 12,12.5" fill="none" stroke="#333" stroke-width="1.3"/><path d="M1.5,11 L4.5,13.5 L1.5,15Z" fill="#333"/></svg><svg class="a" style="left:866px;top:1023px" width="6" height="4" viewBox="0 0 6 4" ><path d="M0,0 L6,0 L3.0,4Z" fill="#333"/></svg><svg class="a" style="left:877px;top:1016px" width="17" height="16" viewBox="0 0 17 16" ><rect x="1" y="6" width="15" height="9.5" fill="none" stroke="#444" stroke-width="1"/><rect x="4" y="9" width="9" height="3.5" fill="#9ab"/><path d="M2,6 L4,2 L8,4 L13,1 V6" fill="none" stroke="#444" stroke-width="1"/></svg><svg class="a" style="left:903px;top:1016px" width="17" height="17" viewBox="0 0 17 17" ><path d="M4,16 Q1,12 1.5,9 Q2,7.5 4,9 L5,10 V3 Q5,1.5 6.3,1.5 Q7.5,1.5 7.5,3 V8 V1.8 Q7.5,0.5 8.8,0.5 Q10,0.5 10,1.8 V8 V2.5 Q10,1.2 11.3,1.2 Q12.5,1.2 12.5,2.5 V9 V4.5 Q12.5,3.4 13.6,3.4 Q14.8,3.4 14.8,4.5 V11 Q14.8,15 12,16Z" fill="#fff" stroke="#333" stroke-width="1"/></svg><svg class="a" style="left:928px;top:1016px" width="18" height="17" viewBox="0 0 18 17" ><circle cx="6.5" cy="7.5" r="5" fill="#d8e8f0" stroke="#333" stroke-width="1.2"/><path d="M10,11 L14,15" stroke="#333" stroke-width="2.4"/><path d="M13,1 V6 M10.5,3.5 H15.5 M10.5,7.5 H15.5" stroke="#333" stroke-width="1"/></svg><svg class="a" style="left:955px;top:1016px" width="17" height="17" viewBox="0 0 17 17" ><rect x="0.5" y="0.5" width="16" height="15" fill="none" stroke="#555" stroke-dasharray="1.5,1.5" stroke-width="0.8"/><circle cx="7.5" cy="7" r="5.5" fill="#d8e8f0" stroke="#333" stroke-width="1.2"/><path d="M11,11 L15,15" stroke="#333" stroke-width="2.4"/></svg><svg class="a" style="left:977px;top:1023px" width="6" height="4" viewBox="0 0 6 4" ><path d="M0,0 L6,0 L3.0,4Z" fill="#333"/></svg><svg class="a" style="left:988px;top:1016px" width="17" height="16" viewBox="0 0 17 16" ><rect x="0.7" y="0.7" width="15.6" height="11" rx="1" fill="#eee" stroke="#333" stroke-width="1.1"/><rect x="3" y="3" width="11" height="6.5" fill="#8fb4e0"/><rect x="6" y="12" width="5" height="2.5" fill="#888"/><rect x="4" y="14" width="9" height="1.5" fill="#aaa"/></svg><svg class="a" style="left:1006px;top:1023px" width="6" height="4" viewBox="0 0 6 4" ><path d="M0,0 L6,0 L3.0,4Z" fill="#333"/></svg><svg class="a" style="left:1019px;top:1016px" width="16" height="16" viewBox="0 0 16 16" ><rect x="0.5" y="0.5" width="15" height="15" fill="#888"/><rect x="1.5" y="1.5" width="2.3" height="2.3" fill="#eee"/><rect x="1.5" y="5.1" width="2.3" height="2.3" fill="#eee"/><rect x="1.5" y="8.7" width="2.3" height="2.3" fill="#eee"/><rect x="1.5" y="12.3" width="2.3" height="2.3" fill="#eee"/><rect x="5.1" y="1.5" width="2.3" height="2.3" fill="#eee"/><rect x="5.1" y="5.1" width="2.3" height="2.3" fill="#eee"/><rect x="5.1" y="8.7" width="2.3" height="2.3" fill="#eee"/><rect x="5.1" y="12.3" width="2.3" height="2.3" fill="#eee"/><rect x="8.7" y="1.5" width="2.3" height="2.3" fill="#eee"/><rect x="8.7" y="5.1" width="2.3" height="2.3" fill="#eee"/><rect x="8.7" y="8.7" width="2.3" height="2.3" fill="#eee"/><rect x="8.7" y="12.3" width="2.3" height="2.3" fill="#eee"/><rect x="12.3" y="1.5" width="2.3" height="2.3" fill="#eee"/><rect x="12.3" y="5.1" width="2.3" height="2.3" fill="#eee"/><rect x="12.3" y="8.7" width="2.3" height="2.3" fill="#eee"/><rect x="12.3" y="12.3" width="2.3" height="2.3" fill="#eee"/></svg><svg class="a" style="left:1039px;top:1023px" width="6" height="4" viewBox="0 0 6 4" ><path d="M0,0 L6,0 L3.0,4Z" fill="#333"/></svg><svg class="a" style="left:1050px;top:1016px" width="16" height="16" viewBox="0 0 16 16" ><rect x="0.5" y="0.5" width="15" height="15" fill="#3c5fa0"/><rect x="2" y="2" width="5.5" height="5.5" fill="#8fb4e0"/><rect x="8.5" y="2" width="5.5" height="5.5" fill="#8fb4e0"/><rect x="2" y="8.5" width="5.5" height="5.5" fill="#8fb4e0"/><rect x="8.5" y="8.5" width="5.5" height="5.5" fill="#8fb4e0"/></svg><svg class="a" style="left:1068px;top:1023px" width="6" height="4" viewBox="0 0 6 4" ><path d="M0,0 L6,0 L3.0,4Z" fill="#333"/></svg>
<svg class="a" style="left:1800px;top:160px" width="100" height="105" viewBox="0 0 100 105" ><defs><filter id="vcb" x="-50%" y="-50%" width="200%" height="200%"><feGaussianBlur stdDeviation="5"/></filter></defs><ellipse cx="62" cy="78" rx="30" ry="14" fill="#000" opacity="0.12" filter="url(#vcb)"/><path d="M21.5,29.1 L49.1,6.5 L89.7,19.5 L65.1,46.1Z" fill="#f0f0f0" fill-opacity="0.85" stroke="#777" stroke-width="0.8" stroke-dasharray="3,2"/><path d="M21.5,29.1 L65.1,46.1 L64.6,83.7 L25,66.1Z" fill="#ececec" fill-opacity="0.85" stroke="#777" stroke-width="0.8" stroke-dasharray="3,2"/><path d="M65.1,46.1 L89.7,19.5 L86.2,54.6 L64.6,83.7Z" fill="#e6e6e6" fill-opacity="0.85" stroke="#777" stroke-width="0.8" stroke-dasharray="3,2"/><path d="M25,66.1 L19.5,23" stroke="#6b6bff" stroke-width="1.6"/><path d="M25,66.1 L71.6,88.2" stroke="#f08a8a" stroke-width="1.6"/><text x="14" y="20" font-size="11" fill="#6b6bff" font-family="Liberation Sans">Z</text><text x="74" y="97" font-size="12" fill="#f07878" font-family="Liberation Sans">X</text><g fill="none" stroke="#9a9a9a" stroke-width="1.5" vector-effect="non-scaling-stroke"><path transform="matrix(1.678,0.653,-0.951,1.028,51.4,17.6)" vector-effect="non-scaling-stroke" d="M5,1 V9 M5,5 H8.5 M0.5,9 H9.5"/><path transform="matrix(2.05,0.799,0.207,2.19,33.7,42.05)" vector-effect="non-scaling-stroke" d="M2.5,0.5 L3.5,2 M7.5,0.5 L6.5,2 M0.5,2.8 H9.5 M2,4.2 V9.6 M2,4.2 H5 V9.6 H4.2 M2,6 H5 M2,7.7 H5 M7,4.3 V8.3 M8.8,3.8 V9.6 L8,9.6"/><path transform="matrix(0.883,-0.954,-0.023,1.8,72.7,47.8)" vector-effect="non-scaling-stroke" d="M0.5,3 H9.5 M5,0.3 Q4,6 0.8,9.5 M3.8,6 H8.8 V9.7 H3.8 Z"/></g></svg>
<div class="a" style="left:0;top:1040px;width:1920px;height:8px;background:#111;overflow:hidden"><div class="a txt" style="left:1872px;top:5px;font-size:12px;color:#fff;font-weight:bold;line-height:1">21:45</div></div><div class="a" style="left:490px;top:1040px;width:48px;height:8px;background:#333"></div>
</body></html>
